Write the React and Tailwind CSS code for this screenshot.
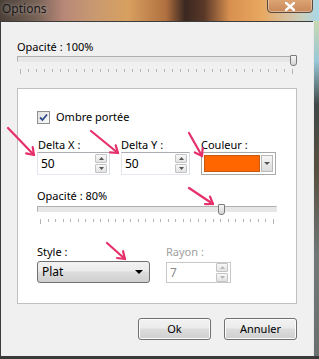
import React from "react";

const font = { fontFamily: '"Noto Sans", "DejaVu Sans", sans-serif' };

function Ticks({ n, className }) {
  return (
    <div className={"flex justify-between " + className}>
      {Array.from({ length: n }).map((_, i) => (
        <div key={i} className={"w-px bg-[#b4b4b4] " + (i === 0 || i === n - 1 ? "h-[5px]" : "h-[3px]")} />
      ))}
    </div>
  );
}

function Thumb() {
  return (
    <div className="w-[7px] h-[11px] rounded-b-[3px] rounded-t-[1px] border border-[#7a7a7a] bg-gradient-to-b from-[#f4f4f4] to-[#d6d6d6]" />
  );
}

function Spin({ disabled }) {
  const c = disabled ? "#b8b8b8" : "#555";
  return (
    <div className="flex flex-col gap-px">
      {[0, 1].map((i) => (
        <div key={i} className="w-[12px] h-[9px] border border-[#c4c4c4] rounded-[1px] bg-gradient-to-b from-[#f8f8f8] to-[#e2e2e2] flex items-center justify-center">
          <svg width="5" height="3" viewBox="0 0 5 3">
            {i === 0 ? <polygon points="0,3 5,3 2.5,0" fill={c} /> : <polygon points="0,0 5,0 2.5,3" fill={c} />}
          </svg>
        </div>
      ))}
    </div>
  );
}

function Arrow({ x1, y1, x2, y2 }) {
  const a = Math.atan2(y2 - y1, x2 - x1);
  const L = 8;
  const s = 0.6;
  const p1 = [x2 - L * Math.cos(a - s), y2 - L * Math.sin(a - s)];
  const p2 = [x2 - L * Math.cos(a + s), y2 - L * Math.sin(a + s)];
  return (
    <g stroke="#e5306a" strokeWidth="2.2" fill="none" strokeLinecap="round" strokeLinejoin="round">
      <line x1={x1} y1={y1} x2={x2} y2={y2} />
      <polyline points={`${p1[0]},${p1[1]} ${x2},${y2} ${p2[0]},${p2[1]}`} />
    </g>
  );
}

function Btn({ children }) {
  return (
    <div className="w-[73px] h-[22px] rounded-[3px] border border-[#707070] bg-[linear-gradient(#f2f2f2_0%,#ebebeb_45%,#dddddd_50%,#cfcfcf_100%)] flex items-center justify-center text-black shadow-[inset_0_0_0_1px_#fcfcfc]">
      {children}
    </div>
  );
}

export default function App() {
  return (
    <div className="relative w-[319px] h-[359px] overflow-hidden flex flex-col text-[11px] leading-[16px] text-black" style={font}>
      {/* title bar */}
      <div className="h-[21px] shrink-0 relative bg-[linear-gradient(90deg,#4a4038_0%,#7a6458_12%,#b88878_20%,#c99a70_30%,#d8a060_40%,#b07040_52%,#3a2820_58%,#5a3828_64%,#d89050_72%,#e8a860_82%,#d8c0a0_90%,#c8d0c0_95%,#a8d8e8_100%)]">
        <div className="absolute left-[2px] top-[1px] text-[12px] leading-[16px] text-[#1a1a1a] [text-shadow:0_0_4px_rgba(255,255,255,0.5)]">Options</div>
        <div className="absolute left-[267px] top-[-3px] w-[46px] h-[16px] rounded-b-[4px] border border-[#5a4a40] bg-[linear-gradient(#e0a878,#c88858)] shadow-[inset_0_0_0_1px_rgba(255,255,255,0.35)] flex items-center justify-center pt-[2px]">
          <svg width="10" height="9" viewBox="0 0 10 9">
            <path d="M1 1 L9 8 M9 1 L1 8" stroke="#fff" strokeWidth="2.4" strokeLinecap="square" />
          </svg>
        </div>
      </div>
      <div className="flex flex-1">
        {/* client */}
        <div className="w-[313px] bg-[#f0f0f0] border-l border-t border-[#3c3c3c] flex flex-col pl-[16px] pr-[16px]">
          <div className="mt-[17px]">Opacité : 100%</div>
          {/* slider 100 */}
          <div className="relative w-[280px] h-[17px]">
            <div className="absolute left-0 right-[1px] top-[1px] h-[6px] border border-[#b0b0b0] border-b-[#e8e8e8] border-r-[#e8e8e8] bg-[#e6e6e6]" />
            <div className="absolute left-[273px] top-0">
              <Thumb />
            </div>
            <Ticks n={35} className="absolute left-[3px] right-[4px] top-[14px]" />
          </div>
          {/* group */}
          <div className="mt-[16px] w-[280px] h-[216px] bg-white border border-[#c0c0c0] flex flex-col pl-[19px]">
            <div className="mt-[20px] h-[16px] flex items-center gap-[6px]">
              <div className="w-[13px] h-[13px] border border-[#8f8f8f] bg-gradient-to-br from-[#e0e0e0] to-[#fafafa] flex items-center justify-center">
                <svg width="9" height="9" viewBox="0 0 9 9">
                  <path d="M1 4.5 L3.5 7 L8 1.5" stroke="#2e4a8a" strokeWidth="1.8" fill="none" />
                </svg>
              </div>
              <span>Ombre portée</span>
            </div>
            <div className="mt-[13px] flex">
              <div className="flex flex-col w-[84px]">
                <span className="pl-[1px] leading-[14px]">Delta X :</span>
                <div className="w-[73px] h-[23px] bg-white border border-[#abadb3] border-l-[#e2e3ea] border-r-[#dbdfe6] border-b-[#e3e9ef] flex items-center justify-between pl-[3px] pr-[2px]">
                  <span className="text-[12px]">50</span>
                  <Spin />
                </div>
              </div>
              <div className="flex flex-col w-[80px]">
                <span className="leading-[14px]">Delta Y :</span>
                <div className="w-[69px] h-[23px] bg-white border border-[#abadb3] border-l-[#e2e3ea] border-r-[#dbdfe6] border-b-[#e3e9ef] flex items-center justify-between pl-[3px] pr-[2px]">
                  <span className="text-[12px]">50</span>
                  <Spin />
                </div>
              </div>
              <div className="flex flex-col">
                <span className="leading-[14px]">Couleur :</span>
                <div className="w-[75px] h-[23px] border border-[#a8a8a8] bg-white flex items-stretch p-[2px] gap-px">
                  <div className="w-[56px] bg-[#ff6600] border border-[#c85a10]" />
                  <div className="flex-1 border border-[#b8b8b8] bg-gradient-to-b from-[#f6f6f6] to-[#dcdcdc] flex items-center justify-center">
                    <svg width="6" height="3" viewBox="0 0 6 3"><polygon points="0,0 6,0 3,3" fill="#555" /></svg>
                  </div>
                </div>
              </div>
            </div>
            <div className="mt-[13px]">Opacité : 80%</div>
            <div className="relative w-[240px] h-[18px]">
              <div className="absolute left-0 right-0 top-[2px] h-[6px] border border-[#b0b0b0] border-b-[#e8e8e8] border-r-[#e8e8e8] bg-[#e6e6e6]" />
              <div className="absolute left-[181px] top-0">
                <Thumb />
              </div>
              <Ticks n={32} className="absolute left-[3px] right-[3px] top-[15px]" />
            </div>
            <div className="mt-[22px] flex">
              <div className="flex flex-col w-[129px]">
                <span>Style :</span>
                <div className="mt-[1px] w-[113px] h-[22px] rounded-[3px] border border-[#707070] bg-[linear-gradient(#f2f2f2_0%,#ebebeb_45%,#dddddd_50%,#cfcfcf_100%)] flex items-center justify-between pl-[4px] pr-[6px]">
                  <span className="text-[12px]">Plat</span>
                  <svg width="8" height="4" viewBox="0 0 8 4"><polygon points="0,0 8,0 4,4" fill="#000" /></svg>
                </div>
              </div>
              <div className="flex flex-col">
                <span className="text-[#a0a0a0]">Rayon :</span>
                <div className="mt-[2px] w-[65px] h-[21px] bg-white border border-[#c8c8c8] flex items-center justify-between pl-[3px] pr-[2px]">
                  <span className="text-[#8a8a8a] text-[12px]">7</span>
                  <Spin disabled />
                </div>
              </div>
            </div>
          </div>
          <div className="mt-[14px] flex justify-end gap-[13px]">
            <Btn>Ok</Btn>
            <Btn>Annuler</Btn>
          </div>
        </div>
        {/* right frame */}
        <div className="w-[6px] border-l border-[#e8e8e8] bg-[linear-gradient(#c8d8b0_0%,#98c8d8_12%,#404848_25%,#585040_45%,#707878_70%,#6a7070_100%)]" />
      </div>
      <div className="h-[3px] shrink-0 bg-[#3a3a3a]" />
      <svg className="absolute left-0 top-0 pointer-events-none" width="319" height="359">
        <Arrow x1={8} y1={128} x2={34} y2={155} />
        <Arrow x1={91} y1={131} x2={118} y2={153} />
        <Arrow x1={189} y1={133} x2={202} y2={156} />
        <Arrow x1={189} y1={188} x2={213} y2={204} />
        <Arrow x1={107} y1={243} x2={125} y2={259} />
      </svg>
    </div>
  );
}
